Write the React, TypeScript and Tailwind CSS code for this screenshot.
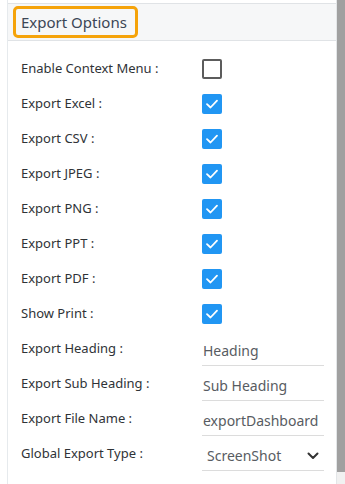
import React from 'react';

type Row =
  | { label: string; kind: 'check'; checked: boolean }
  | { label: string; kind: 'text'; value: string }
  | { label: string; kind: 'select'; value: string };

const rows: Row[] = [
  { label: 'Enable Context Menu :', kind: 'check', checked: false },
  { label: 'Export Excel :', kind: 'check', checked: true },
  { label: 'Export CSV :', kind: 'check', checked: true },
  { label: 'Export JPEG :', kind: 'check', checked: true },
  { label: 'Export PNG :', kind: 'check', checked: true },
  { label: 'Export PPT :', kind: 'check', checked: true },
  { label: 'Export PDF :', kind: 'check', checked: true },
  { label: 'Show Print :', kind: 'check', checked: true },
  { label: 'Export Heading :', kind: 'text', value: 'Heading' },
  { label: 'Export Sub Heading :', kind: 'text', value: 'Sub Heading' },
  { label: 'Export File Name :', kind: 'text', value: 'exportDashboard' },
  { label: 'Global Export Type :', kind: 'select', value: 'ScreenShot' },
];

const CheckBox: React.FC<{ checked: boolean }> = ({ checked }) =>
  checked ? (
    <div className="w-5 h-5 rounded-[2px] bg-[#2196f3] flex items-center justify-center">
      <svg width="14" height="14" viewBox="0 0 14 14" fill="none">
        <path d="M2 7.2 L5.5 10.5 L12 3.6" stroke="white" strokeWidth="1.8" strokeLinecap="round" strokeLinejoin="round" />
      </svg>
    </div>
  ) : (
    <div className="w-5 h-5 rounded-[2px] border-2 border-[#5c5c5c] bg-white" />
  );

export default function App() {
  return (
    <div className="w-[345px] h-[484px] bg-white flex overflow-hidden" style={{ fontFamily: '"Noto Sans", sans-serif' }}>
      <div className="w-[7px] shrink-0 bg-white" />
      <div className="w-[1px] shrink-0 bg-[#e6eaed]" />
      <div className="flex-1 flex flex-col border-r border-[#e3e6e8]">
        <div className="h-[4px] border-b border-[#e0e3e6]" />
        <div className="h-[37px] bg-[#f6f7f8] border-b border-[#e0e3e6] flex items-center pl-[5px]">
          <div className="h-[32px] w-[125px] border-[3px] border-[#f5a30a] rounded-[5px] flex items-center pl-[5px]">
            <span className="text-[15px] text-[#3b4656] leading-none">Export Options</span>
          </div>
        </div>
        <div className="flex flex-col pt-[10px] pl-[13px] pr-[12px]">
          {rows.map(row => (
            <div key={row.label} className="h-[35px] flex items-center">
              <span className="w-[181px] shrink-0 text-[13px] text-[#2f3337]">{row.label}</span>
              {row.kind === 'check' && <CheckBox checked={row.checked} />}
              {row.kind === 'text' && (
                <div className="flex-1 h-[35px] flex items-end">
                  <div className="w-full h-[30px] flex items-center border-b border-[#dcdcdc] pl-[1px] text-[14px] text-[#585c62]">
                    {row.value}
                  </div>
                </div>
              )}
              {row.kind === 'select' && (
                <div className="flex-1 h-[35px] flex items-end">
                  <div className="w-full h-[30px] flex items-center justify-between border-b border-[#dcdcdc] pl-[5px] pr-[5px] text-[14px] text-[#585c62]">
                    <span>{row.value}</span>
                    <svg width="12" height="8" viewBox="0 0 12 8" fill="none">
                      <path d="M1.5 1.5 L6 6 L10.5 1.5" stroke="#333" strokeWidth="2" strokeLinecap="round" strokeLinejoin="round" />
                    </svg>
                  </div>
                </div>
              )}
            </div>
          ))}
        </div>
      </div>
      <div className="w-[8px] shrink-0 flex flex-col bg-[#f1f1f1]">
        <div className="h-[472px] bg-[#a0a0a0]" />
      </div>
    </div>
  );
}
